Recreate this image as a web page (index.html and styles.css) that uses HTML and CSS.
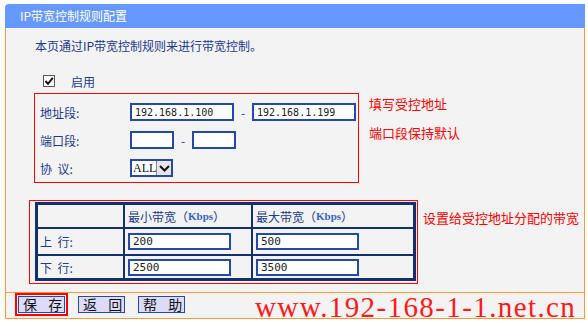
FILE: index.html
```html
<!DOCTYPE html>
<html lang="zh-CN">
<head>
    <meta charset="UTF-8">
    <title>IP带宽控制规则配置</title>
    <link rel="stylesheet" href="styles.css">
</head>
<body>
    <div class="frame">
        <div class="title">IP带宽控制规则配置</div>
        <div class="panel">
            <p class="intro">本页通过IP带宽控制规则来进行带宽控制。</p>
            <div class="enable-row">
                <span class="check">
                    <svg width="10" height="10" viewBox="0 0 10 10"><path d="M1.5 5 L4 7.8 L8.8 1.8" fill="none" stroke="#111" stroke-width="2"/></svg>
                </span>
                <span>启用</span>
            </div>

            <div class="section">
                <div class="red-box rule-box">
                    <div class="field">
                        <label>地址段:</label>
                        <input class="ip" type="text" value="192.168.1.100">
                        <span class="dash">-</span>
                        <input class="ip" type="text" value="192.168.1.199">
                    </div>
                    <div class="field">
                        <label>端口段:</label>
                        <input class="port" type="text">
                        <span class="dash">-</span>
                        <input class="port" type="text">
                    </div>
                    <div class="field">
                        <label>协&nbsp;&nbsp;议:</label>
                        <div class="select">
                            <span class="select-value">ALL</span>
                            <span class="select-btn">
                                <svg width="11" height="7" viewBox="0 0 11 7"><path d="M1 1 L5.5 5.5 L10 1" fill="none" stroke="#111" stroke-width="2"/></svg>
                            </span>
                        </div>
                    </div>
                </div>
                <div class="notes">
                    <div class="note note-addr">填写受控地址</div>
                    <div class="note note-port">端口段保持默认</div>
                </div>
            </div>

            <div class="section">
                <div class="red-box bw-box">
                    <div class="bw">
                        <div class="cell"></div>
                        <div class="cell">最小带宽（<span class="unit">Kbps</span>）</div>
                        <div class="cell">最大带宽（<span class="unit">Kbps</span>）</div>
                        <div class="cell">上&nbsp;&nbsp;行:</div>
                        <div class="cell"><input class="rate" type="text" value="200"></div>
                        <div class="cell"><input class="rate" type="text" value="500"></div>
                        <div class="cell">下&nbsp;&nbsp;行:</div>
                        <div class="cell"><input class="rate" type="text" value="2500"></div>
                        <div class="cell"><input class="rate" type="text" value="3500"></div>
                    </div>
                </div>
                <div class="note note-bw">设置给受控地址分配的带宽</div>
            </div>
        </div>
        <div class="footer">
            <span class="red-frame"><button type="button">保&nbsp;存</button></span>
            <button type="button">返&nbsp;回</button>
            <button type="button">帮&nbsp;助</button>
            <span class="watermark">www.192-168-1-1.net.cn</span>
        </div>
    </div>
</body>
</html>
```

FILE: styles.css
```css
body {
    margin: 0;
    background-color: #fff;
    font-family: "Noto Sans CJK SC", "Liberation Sans", sans-serif;
    font-size: 12px;
    color: #1c3a8c;
}

.frame {
    margin: 4px 0 0 5px;
    width: 580px;
}

.title {
    height: 24px;
    line-height: 24px;
    padding-left: 15px;
    background-color: #6699ff;
    color: #fff;
    border-radius: 4px 0 0 0;
}

.panel {
    height: 264px;
    box-sizing: border-box;
    padding-left: 29px;
    background-color: #f3f3f3;
    border-left: 1px solid #ff9933;
    border-right: 1px solid #ff9933;
    overflow: hidden;
}

.intro {
    margin: 10px 0 0 0;
    line-height: 16px;
}

.enable-row {
    display: flex;
    align-items: center;
    gap: 16px;
    height: 16px;
    margin: 19px 0 0 8px;
}

.check {
    width: 10px;
    height: 10px;
    border: 1px solid #555;
    background-color: #fff;
    display: flex;
}

.section {
    display: flex;
    align-items: flex-start;
}

.red-box {
    border: 1px solid #ff0000;
}

.rule-box {
    margin: 4px 0 0 -1px;
    padding: 4px 2px 0 5px;
    width: 316px;
    height: 84px;
}

.field {
    display: flex;
    align-items: center;
    height: 28px;
}

.field label {
    width: 90px;
}

input {
    box-sizing: border-box;
    height: 18px;
    border: 2px solid #2449a8;
    background-color: #fff;
    padding: 0 3px;
    font-family: "DejaVu Sans Mono", monospace;
    font-size: 10px;
    color: #222;
    outline: none;
}

input.ip {
    width: 104px;
}

input.port {
    width: 44px;
}

.dash {
    width: 18px;
    text-align: center;
}

.select {
    display: flex;
    box-sizing: border-box;
    width: 43px;
    height: 18px;
    border: 2px solid #2449a8;
    background-color: #fff;
}

.select-value {
    flex: 1;
    line-height: 14px;
    padding-left: 1px;
    font-family: "Liberation Serif", serif;
    font-size: 12px;
    color: #111;
}

.select-btn {
    width: 18px;
    display: flex;
    align-items: center;
    justify-content: center;
    background-color: #e6e6e6;
    border-left: 1px solid #888;
}

.notes {
    margin-left: 10px;
}

.note {
    color: #ff0000;
    font-size: 13px;
    line-height: 16px;
}

.note-addr {
    margin-top: 7px;
}

.note-port {
    margin-top: 13px;
}

.bw-box {
    margin: 17px 0 0 -6px;
    padding: 1px 1px 2px 5px;
}

.bw {
    display: grid;
    grid-template-columns: 85px 126px 160px;
    grid-template-rows: 22px 25px 22px;
    gap: 2px;
    border: 3px solid #13306e;
    background-color: #13306e;
}

.cell {
    display: flex;
    align-items: center;
    padding-left: 3px;
    background-color: #f3f3f3;
}

.cell:nth-child(3n+1) {
    padding-left: 2px;
}

.unit {
    font-family: "Liberation Serif", serif;
    font-weight: bold;
    font-size: 11px;
    color: #3366cc;
}

input.rate {
    width: 103px;
    height: 17px;
    font-size: 11px;
}

.note-bw {
    margin: 27px 0 0 5px;
}

.footer {
    position: relative;
    display: flex;
    align-items: flex-start;
    gap: 13px;
    height: 25px;
    padding: 0 0 0 9px;
    background-color: #f3f3f3;
    border: 1px solid #ff9933;
}

.red-frame {
    border: 2px solid #ff0000;
    padding: 1px;
    margin-right: -3px;
    display: flex;
}

button {
    width: 47px;
    height: 17px;
    padding: 0 0 0 4px;
    margin-top: 3px;
    background-color: #dcdcf8;
    border: 1px solid #2449a8;
    font-family: "Noto Sans CJK SC", sans-serif;
    font-size: 14px;
    line-height: 15px;
    letter-spacing: 4px;
    color: #111;
}

.red-frame button {
    margin-top: 0;
}

.watermark {
    position: absolute;
    left: 249px;
    top: 3px;
    white-space: nowrap;
    font-family: "Liberation Serif", serif;
    font-size: 29px;
    line-height: 22px;
    letter-spacing: 1.4px;
    color: #ff1a1a;
}
```
